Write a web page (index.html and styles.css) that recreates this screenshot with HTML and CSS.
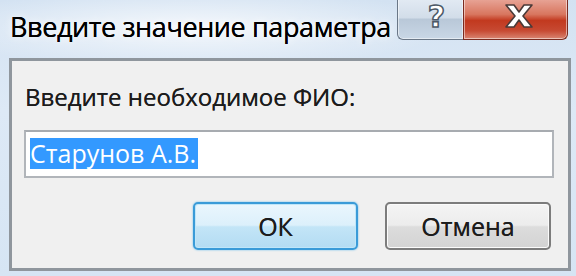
FILE: index.html
```html
<!DOCTYPE html>
<html lang="ru">
<head>
    <meta charset="UTF-8">
    <title>Введите значение параметра</title>
    <link rel="stylesheet" href="styles.css">
</head>
<body>
<div class="window">
    <div class="titlebar">
        <div class="title">Введите значение параметра</div>
        <div class="caption-buttons">
            <div class="cap-btn help"><span class="help-glyph">?</span></div>
            <div class="cap-btn close">
                <svg width="30" height="26" viewBox="0 0 30 26">
                    <path d="M2 2 H10 L15 9 L20 2 H28 L19 13 L28 24 H20 L15 17 L10 24 H2 L11 13 Z"
                          fill="#fff" stroke="#4a3a38" stroke-width="1.6" stroke-linejoin="round"/>
                </svg>
            </div>
        </div>
    </div>
    <div class="panel">
        <div class="label">Введите необходимое ФИО:</div>
        <div class="field"><span class="selected">Старунов А.В.</span></div>
        <div class="buttons">
            <button type="button" class="btn default">ОК</button>
            <button type="button" class="btn">Отмена</button>
        </div>
    </div>
</div>
</body>
</html>
```

FILE: styles.css
```css
html, body {
    margin: 0;
    padding: 0;
}

body {
    width: 576px;
    height: 276px;
    overflow: hidden;
    font-family: "Open Sans", "Noto Sans", sans-serif;
    background: linear-gradient(to bottom, #d3e2f2 0%, #dde9f6 40%, #d6e5f4 100%);
}

.window {
    height: 276px;
}

.titlebar {
    height: 58px;
    display: flex;
    justify-content: space-between;
    align-items: flex-start;
    background: radial-gradient(ellipse 260px 40px at 190px 28px, rgba(255, 255, 255, 0.75), rgba(255, 255, 255, 0));
}

.title {
    padding: 8px 0 0 10px;
    font-size: 27px;
    line-height: 37px;
    color: #000;
    letter-spacing: -0.4px;
    text-shadow: 0 0 0.6px #000, 0 0 8px #fff;
}

.caption-buttons {
    display: flex;
    margin-right: 8px;
    margin-top: -2px;
}

.cap-btn {
    height: 42px;
    box-sizing: border-box;
    border: 1px solid #6a7787;
    border-top: none;
    display: flex;
    align-items: center;
    justify-content: center;
    box-shadow: inset 0 0 0 1px rgba(255, 255, 255, 0.5);
}

.help {
    width: 66px;
    border-right: none;
    border-bottom-left-radius: 6px;
    background: linear-gradient(to bottom, #e3ebf4 0%, #d2dde9 48%, #b9c8d8 52%, #c9d7e6 100%);
}

.help-glyph {
    font-family: "DejaVu Sans", sans-serif;
    font-weight: bold;
    font-size: 30px;
    line-height: 30px;
    color: #fff;
    -webkit-text-stroke: 1.5px #4b5866;
    margin-top: -4px;
    margin-left: 12px;
}

.close {
    width: 105px;
    border-color: #7a2b20;
    border-bottom-right-radius: 6px;
    background: linear-gradient(to bottom, #e9a89b 0%, #d8765f 40%, #c2391f 55%, #c74a33 80%, #d98673 100%);
}

.close svg {
    margin-top: -6px;
    margin-left: 6px;
}

.panel {
    margin: 0 5px 0 9px;
    height: 213px;
    box-sizing: border-box;
    border: 3px solid #8f969d;
    background-color: #f0f0f0;
    padding-top: 19px;
}

.label {
    margin-left: 13px;
    font-size: 24px;
    line-height: 33px;
    color: #1c1c1c;
    text-shadow: 0 0 0.5px #333;
}

.field {
    margin: 17px 14px 0 12px;
    height: 48px;
    box-sizing: border-box;
    border: 2px solid #b1b5ba;
    border-top-color: #a7abb0;
    background-color: #fff;
    padding: 6px 0 0 4px;
}

.selected {
    display: inline-block;
    background-color: #3399ff;
    color: #fff;
    font-size: 25px;
    line-height: 31px;
    padding: 0 2px 0 0;
}

.buttons {
    display: flex;
    justify-content: flex-end;
    gap: 27px;
    margin: 24px 17px 0 0;
}

.btn {
    width: 166px;
    height: 48px;
    font-family: "Open Sans", "Noto Sans", sans-serif;
    font-size: 25px;
    color: #1c1c1c;
    text-shadow: 0 0 0.5px #333;
    border: 2px solid #7c7c7c;
    border-radius: 5px;
    background: linear-gradient(to bottom, #f4f4f4 0%, #ececec 48%, #dcdcdc 52%, #d3d3d3 100%);
    box-shadow: inset 0 0 0 1px #fbfbfb;
    padding: 0;
}

.btn.default {
    width: 165px;
    border-color: #3a9bd8;
    background: linear-gradient(to bottom, #eaf6fd 0%, #dcf0fb 48%, #c3e5f7 52%, #b3dcf3 100%);
    box-shadow: inset 0 0 0 1px #bfe6f9, 0 0 2px #5cb8ea;
}
```
